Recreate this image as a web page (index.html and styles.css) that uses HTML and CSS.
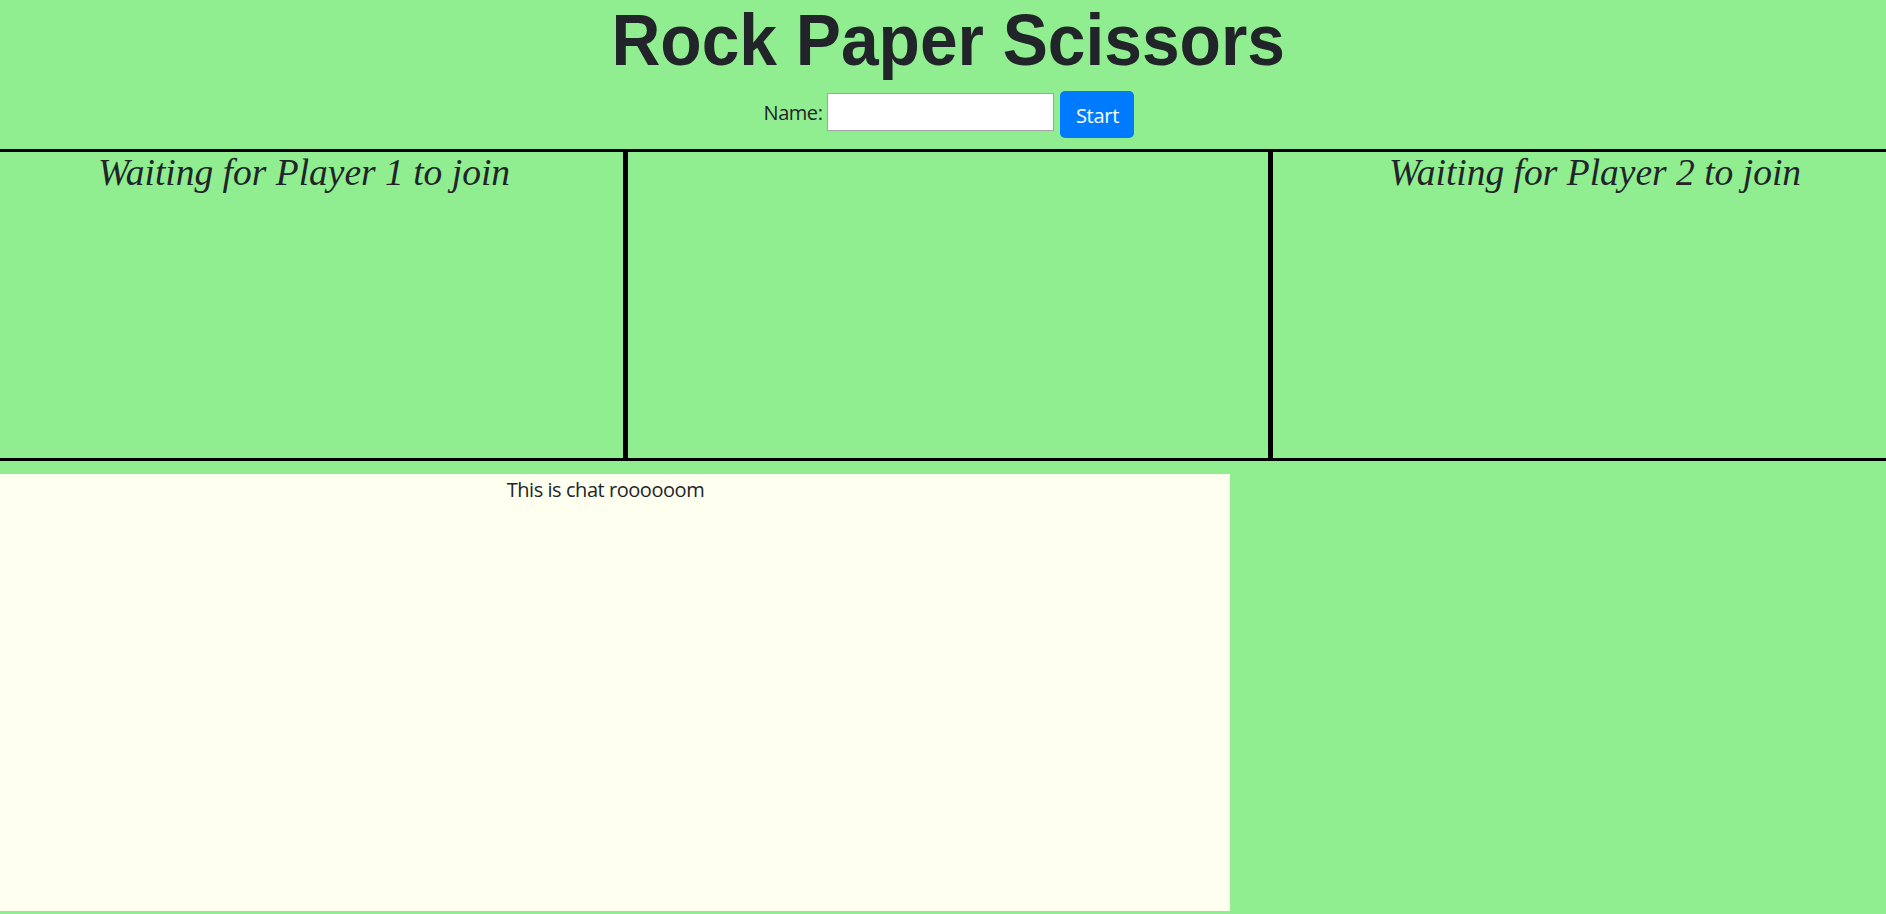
FILE: index.html
```html
<!DOCTYPE html>
<html lang="en">
<head>
<meta charset="utf-8">
<title>Rock Paper Scissors</title>
<link rel="stylesheet" href="styles.css">
</head>
<body>
  <header class="header">
    <h1 class="title"><span class="title-text">Rock Paper Scissors</span></h1>
    <form class="join-form">
      <label class="join-label" for="name">Name:</label>
      <input class="join-input" id="name" type="text">
      <button class="join-btn" type="button">Start</button>
    </form>
  </header>
  <section class="game">
    <div class="player player-1"><h2 class="waiting">Waiting for Player 1 to join</h2></div>
    <div class="arena"></div>
    <div class="player player-2"><h2 class="waiting">Waiting for Player 2 to join</h2></div>
  </section>
  <section class="chat">
    <p class="chat-title">This is chat roooooom</p>
  </section>
</body>
</html>
```
FILE: styles.css
```css
html, body {
  margin: 0;
  padding: 0;
}
body {
  background: #90ee90;
  color: #212529;
  font-family: "Open Sans", "Noto Sans", sans-serif;
  font-size: 20px;
  letter-spacing: -0.45px;
  height: 914px;
  overflow: hidden;
}
.header {
  display: flex;
  flex-direction: column;
  align-items: center;
}
.title {
  margin: 0;
  font-family: "Liberation Sans Narrow", "Arial Narrow", "Liberation Sans", sans-serif;
  font-weight: 700;
  font-size: 72px;
  line-height: 80px;
  letter-spacing: 0;
  padding-left: 10px;
}
.title-text {
  display: inline-block;
  transform: scaleX(0.94);
}
.join-form {
  display: flex;
  align-items: flex-start;
  gap: 5px;
  padding: 11px 0 11px 0;
  height: 47px;
  margin-left: 12px;
}
.join-label {
  line-height: 30px;
  margin-top: 7px;
}
.join-input {
  box-sizing: border-box;
  width: 227px;
  height: 38px;
  margin-top: 2px;
  border: 1px solid #a3a3a3;
  border-radius: 0;
  background: #fff;
  padding: 0 4px;
  font: inherit;
}
.join-btn {
  box-sizing: border-box;
  width: 74px;
  height: 47px;
  margin-left: 1px;
  border: none;
  border-radius: 5px;
  background: #007bff;
  color: #fff;
  font: inherit;
  letter-spacing: -0.3px;
  padding: 2px 0 0 0;
}
.game {
  display: grid;
  grid-template-columns: 623px 650px 1fr;
  height: 306px;
  border-top: 3px solid #000;
  border-bottom: 3px solid #000;
}
.arena {
  border-left: 5px solid #000;
  border-right: 5px solid #000;
}
.waiting {
  margin: 0;
  font-family: "Liberation Serif", "Times New Roman", serif;
  font-style: italic;
  font-weight: 400;
  font-size: 37.5px;
  line-height: 42px;
  letter-spacing: 0;
  text-align: center;
}
.player-1 .waiting {
  padding-right: 15px;
}
.player-2 .waiting {
  padding-left: 31px;
}
.chat {
  width: 1230px;
  height: 437px;
  margin-top: 13px;
  background: #fffff0;
}
.chat-title {
  margin: 0;
  padding-top: 1px;
  line-height: 30px;
  text-align: center;
  padding-right: 19px;
}
```
